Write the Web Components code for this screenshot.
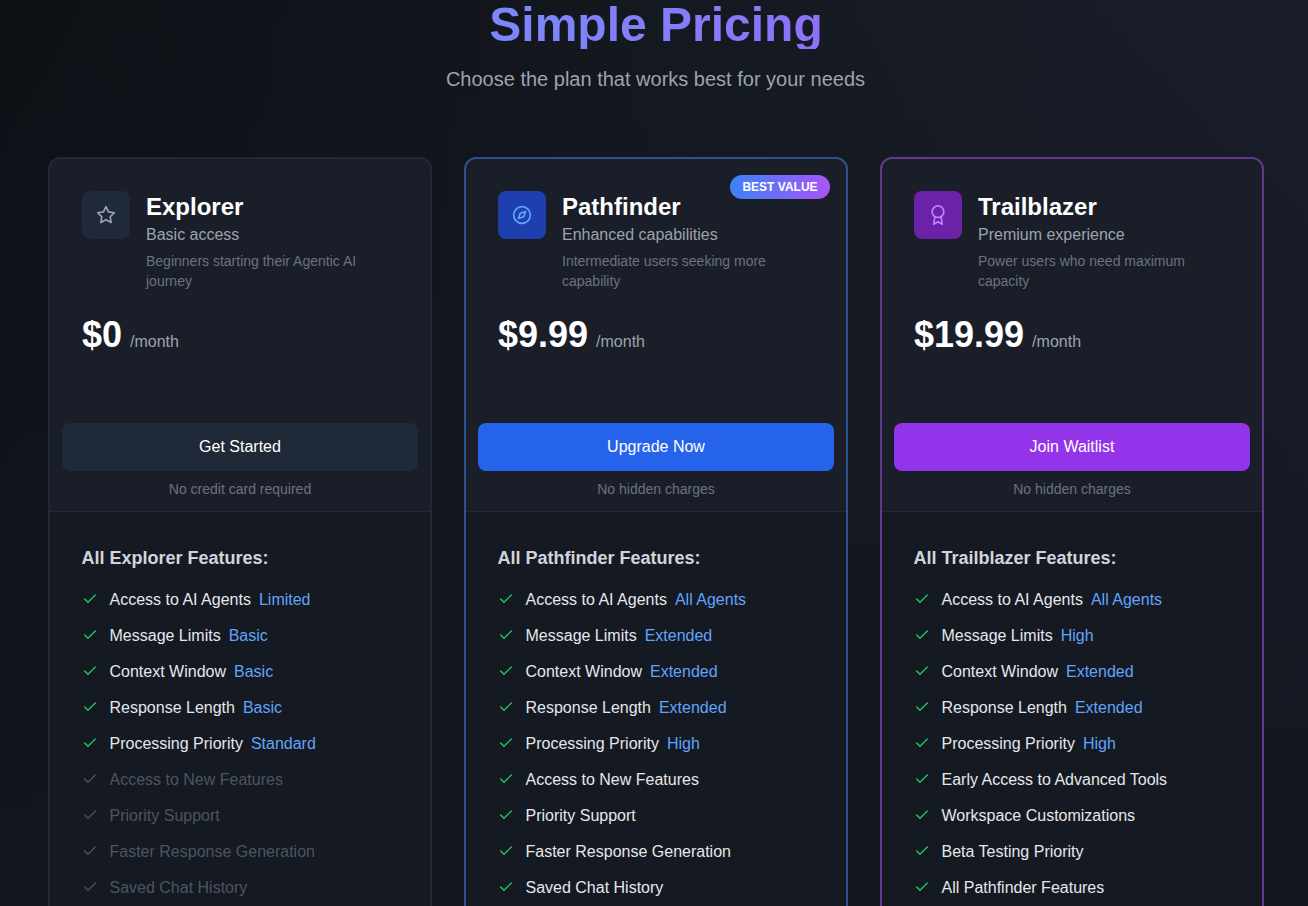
<!doctype html>
<html><head><meta charset="utf-8"><title>Simple Pricing</title>
<style>
html,body{margin:0;height:906px;overflow:hidden}
body{background:linear-gradient(180deg,rgba(18,22,31,0) 0%,#12161f 100%),linear-gradient(90deg,#0d1015 0%,#14181f 50%,#1a1e2a 100%);font-family:"Liberation Sans",Arial,sans-serif;color:#fff}
</style></head><body>
<pricing-page>
<pricing-card tier="explorer" name="Explorer" tag="Basic access" desc="Beginners starting their Agentic AI journey" price="$0" cta="Get Started" note="No credit card required" features-title="All Explorer Features:">
<feat-row value="Limited">Access to AI Agents</feat-row>
<feat-row value="Basic">Message Limits</feat-row>
<feat-row value="Basic">Context Window</feat-row>
<feat-row value="Basic">Response Length</feat-row>
<feat-row value="Standard">Processing Priority</feat-row>
<feat-row off>Access to New Features</feat-row>
<feat-row off>Priority Support</feat-row>
<feat-row off>Faster Response Generation</feat-row>
<feat-row off>Saved Chat History</feat-row>
</pricing-card>
<pricing-card tier="pathfinder" badge="BEST VALUE" name="Pathfinder" tag="Enhanced capabilities" desc="Intermediate users seeking more capability" price="$9.99" cta="Upgrade Now" note="No hidden charges" features-title="All Pathfinder Features:">
<feat-row value="All Agents">Access to AI Agents</feat-row>
<feat-row value="Extended">Message Limits</feat-row>
<feat-row value="Extended">Context Window</feat-row>
<feat-row value="Extended">Response Length</feat-row>
<feat-row value="High">Processing Priority</feat-row>
<feat-row>Access to New Features</feat-row>
<feat-row>Priority Support</feat-row>
<feat-row>Faster Response Generation</feat-row>
<feat-row>Saved Chat History</feat-row>
</pricing-card>
<pricing-card tier="trailblazer" name="Trailblazer" tag="Premium experience" desc="Power users who need maximum capacity" price="$19.99" cta="Join Waitlist" note="No hidden charges" features-title="All Trailblazer Features:">
<feat-row value="All Agents">Access to AI Agents</feat-row>
<feat-row value="High">Message Limits</feat-row>
<feat-row value="Extended">Context Window</feat-row>
<feat-row value="Extended">Response Length</feat-row>
<feat-row value="High">Processing Priority</feat-row>
<feat-row>Early Access to Advanced Tools</feat-row>
<feat-row>Workspace Customizations</feat-row>
<feat-row>Beta Testing Priority</feat-row>
<feat-row>All Pathfinder Features</feat-row>
</pricing-card>
</pricing-page>
<script>
class PricingPage extends HTMLElement{constructor(){super();this.attachShadow({mode:'open'}).innerHTML=`<style>
:host{display:block;width:1216px;padding:1px 0 0 48px}
h1{margin:0;font-size:48px;line-height:48px;font-weight:700;text-align:center;background:linear-gradient(90deg,#60a5fa,#a855f7);-webkit-background-clip:text;background-clip:text;color:transparent}
p{margin:16px 0 0;padding-right:1px;font-size:20px;line-height:28px;color:#9ca3af;text-align:center}
.grid{display:grid;grid-template-columns:repeat(3,384px);gap:32px;margin-top:64px}
</style><h1>Simple Pricing</h1><p>Choose the plan that works best for your needs</p><div class="grid"><slot></slot></div>`}}
const ICONS={
explorer:'<polygon points="12 2 15.09 8.26 22 9.27 17 14.14 18.18 21.02 12 17.77 5.82 21.02 7 14.14 2 9.27 8.91 8.26 12 2"/>',
pathfinder:'<circle cx="12" cy="12" r="10"/><polygon points="16.24 7.76 14.12 14.12 7.76 16.24 9.88 9.88 16.24 7.76"/>',
trailblazer:'<circle cx="12" cy="8" r="7"/><polyline points="8.21 13.89 7 23 12 20 17 23 15.79 13.88"/>'};
const TIERS={
explorer:{border:'#1f2937',ibg:'#1f2937',ic:'#9ca3af',btn:'#1f2937'},
pathfinder:{border:'#2d5190',ibg:'#1e40af',ic:'#60a5fa',btn:'#2563eb'},
trailblazer:{border:'#5f3a8e',ibg:'#6b21a8',ic:'#c084fc',btn:'#9333ea'}};
class PricingCard extends HTMLElement{constructor(){super();this.attachShadow({mode:'open'})}
connectedCallback(){const a=n=>this.getAttribute(n)||'';const t=TIERS[a('tier')];
this.shadowRoot.innerHTML=`<style>
:host{display:block;position:relative;height:900px;box-sizing:border-box;border:2px solid ${t.border};border-radius:12px;background:#1a1e29;overflow:hidden}
.badge{position:absolute;top:16px;right:16px;width:100px;height:24px;line-height:24px;text-align:center;border-radius:12px;background:linear-gradient(90deg,#3b82f6,#a855f7);font-size:12px;font-weight:700;color:#fff}
.top{padding:32px 32px 0}
.head{display:flex;gap:16px}
.icon{flex:none;width:48px;height:48px;border-radius:8px;background:${t.ibg};display:flex;align-items:center;justify-content:center}
svg.i{width:20px;height:20px;fill:none;stroke:${t.ic};stroke-width:2;stroke-linecap:round;stroke-linejoin:round}
h3{margin:0;font-size:24px;line-height:32px;font-weight:700;color:#fff}
.tag{font-size:16px;line-height:24px;color:#9ca3af}
.desc{font-size:14px;line-height:20px;color:#6b7280;margin-top:4px}
.price{display:flex;align-items:baseline;gap:8px;margin-top:24px;height:40px}
.price b{font-size:36px;line-height:40px}
.price span{font-size:16px;color:#9ca3af}
.act{padding:68px 12px 0}
button{display:block;width:100%;height:48px;border:0;border-radius:8px;background:${t.btn};color:#fff;font:16px "Liberation Sans",Arial,sans-serif}
.note{font-size:14px;line-height:20px;color:#6b7280;text-align:center;margin:8px -12px 0;padding-bottom:12px;border-bottom:1px solid #262b37}
.feat{background:#151922;height:500px;padding:32px 32px 0}
h4{margin:0 0 10px -.5px;font-size:18px;line-height:28px;color:#d1d5db;font-weight:700}
.list{display:flex;flex-direction:column}
</style>${a('badge')?`<div class="badge">${a('badge')}</div>`:''}
<div class="top"><div class="head"><div class="icon"><svg class="i" viewBox="0 0 24 24">${ICONS[a('tier')]}</svg></div><div><h3>${a('name')}</h3><div class="tag">${a('tag')}</div><div class="desc">${a('desc')}</div></div></div>
<div class="price"><b>${a('price')}</b><span>/month</span></div></div>
<div class="act"><button>${a('cta')}</button><div class="note">${a('note')}</div></div>
<div class="feat"><h4>${a('features-title')}</h4><div class="list"><slot></slot></div></div>`}}
class FeatRow extends HTMLElement{constructor(){super();this.attachShadow({mode:'open'})}
connectedCallback(){const off=this.hasAttribute('off'),v=this.getAttribute('value');
this.shadowRoot.innerHTML=`<style>
:host{display:flex;align-items:center;height:36px;font-size:16px;color:${off?'#4b5563':'#e5e7eb'}}
svg{flex:none;width:16px;height:16px;margin-right:11.5px;margin-top:-2px;fill:none;stroke:${off?'#4b5563':'#22c55e'};stroke-width:2;stroke-linecap:round;stroke-linejoin:round}
.v{color:#60a5fa;margin-left:8px}
</style><svg viewBox="0 0 24 24"><path d="M20 6 9 17l-5-5"/></svg><span><slot></slot></span>${v?`<span class="v">${v}</span>`:''}`}}
customElements.define('pricing-page',PricingPage);
customElements.define('pricing-card',PricingCard);
customElements.define('feat-row',FeatRow);
</script></body></html>
